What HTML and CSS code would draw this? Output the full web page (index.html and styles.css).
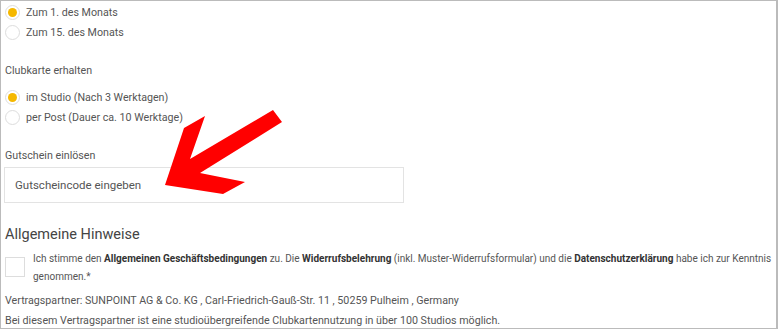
FILE: index.html
```html
<!DOCTYPE html>
<html lang="de">
<head>
    <meta charset="UTF-8">
    <meta name="viewport" content="width=device-width, initial-scale=1.0">
    <title>Mitgliedschaft</title>
    <link rel="stylesheet" href="styles.css">
</head>
<body>
    <div class="page">
        <div class="radio-group">
            <label class="radio-row"><span class="radio checked"></span>Zum 1. des Monats</label>
            <label class="radio-row"><span class="radio"></span>Zum 15. des Monats</label>
        </div>

        <div class="field-label label-club">Clubkarte erhalten</div>
        <div class="radio-group">
            <label class="radio-row"><span class="radio checked"></span>im Studio (Nach 3 Werktagen)</label>
            <label class="radio-row"><span class="radio"></span>per Post (Dauer ca. 10 Werktage)</label>
        </div>

        <div class="field-label label-voucher">Gutschein einlösen</div>
        <input type="text" class="voucher-input" placeholder="Gutscheincode eingeben">

        <h2 class="section-title">Allgemeine Hinweise</h2>
        <div class="terms">
            <span class="checkbox"></span>
            <p class="terms-text">Ich stimme den <b>Allgemeinen Geschäftsbedingungen</b> zu. Die <b>Widerrufsbelehrung</b> (inkl. Muster-Widerrufsformular) und die <b>Datenschutzerklärung</b> habe ich zur Kenntnis genommen.*</p>
        </div>

        <div class="partner">
            <p>Vertragspartner: SUNPOINT AG &amp; Co. KG , Carl-Friedrich-Gauß-Str. 11 , 50259 Pulheim , Germany</p>
            <p>Bei diesem Vertragspartner ist eine studioübergreifende Clubkartennutzung in über 100 Studios möglich.</p>
        </div>

        <!-- red annotation arrow pointing at the voucher field -->
        <svg class="arrow" width="778" height="329" viewBox="0 0 778 329">
            <polygon points="165,185 184,128 205,116 190,159 273,110 282,122 200,173 245,182 223,194" fill="#ff0000"/>
        </svg>
    </div>
</body>
</html>
```

FILE: styles.css
```css
body {
    margin: 0;
    padding: 0;
    font-family: Roboto, "Liberation Sans", Arial, sans-serif;
    font-size: 10.7px;
    color: #555;
    background-color: #fff;
}
.page {
    position: relative;
    width: 778px;
    height: 329px;
    box-sizing: border-box;
    border: 1px solid #bbb;
    border-right-width: 2px;
    padding: 1px 0 0 3px;
    overflow: hidden;
}
.radio-group {
    display: flex;
    flex-direction: column;
}
.radio-row {
    display: flex;
    align-items: center;
    height: 20px;
}
.radio {
    width: 15px;
    height: 15px;
    border: 1px solid #ddd;
    border-radius: 50%;
    box-sizing: border-box;
    margin: 0 6px 0 1px;
    display: flex;
    align-items: center;
    justify-content: center;
}
.radio.checked::after {
    content: "";
    width: 9px;
    height: 9px;
    border-radius: 50%;
    background-color: #f5b800;
}
.field-label {
    line-height: 20px;
}
.label-club {
    margin: 19px 0 6px 1px;
}
.label-voucher {
    margin: 19px 0 1px 1px;
}
.voucher-input {
    display: block;
    width: 400px;
    height: 36px;
    box-sizing: border-box;
    border: 1px solid #e3e3e3;
    padding: 0 10px;
    font-family: inherit;
    font-size: 11.5px;
    color: #555;
    outline: none;
}
.voucher-input::placeholder {
    color: #555;
}
.section-title {
    margin: 22px 0 5px 1px;
    font-size: 14.5px;
    font-weight: normal;
    line-height: 20px;
    color: #444;
}
.terms {
    display: flex;
    align-items: flex-start;
}
.checkbox {
    flex: none;
    width: 20px;
    height: 20px;
    box-sizing: border-box;
    border: 1px solid #ddd;
    margin: 7px 8px 0 1px;
}
.terms-text {
    margin: 0;
    font-size: 10px;
    line-height: 18px;
}
.terms-text b {
    color: #333;
}
.partner {
    margin: 5px 0 0 1px;
}
.partner p {
    margin: 0;
    line-height: 20px;
}
.arrow {
    position: absolute;
    top: -1px;
    left: -1px;
    pointer-events: none;
}
```
